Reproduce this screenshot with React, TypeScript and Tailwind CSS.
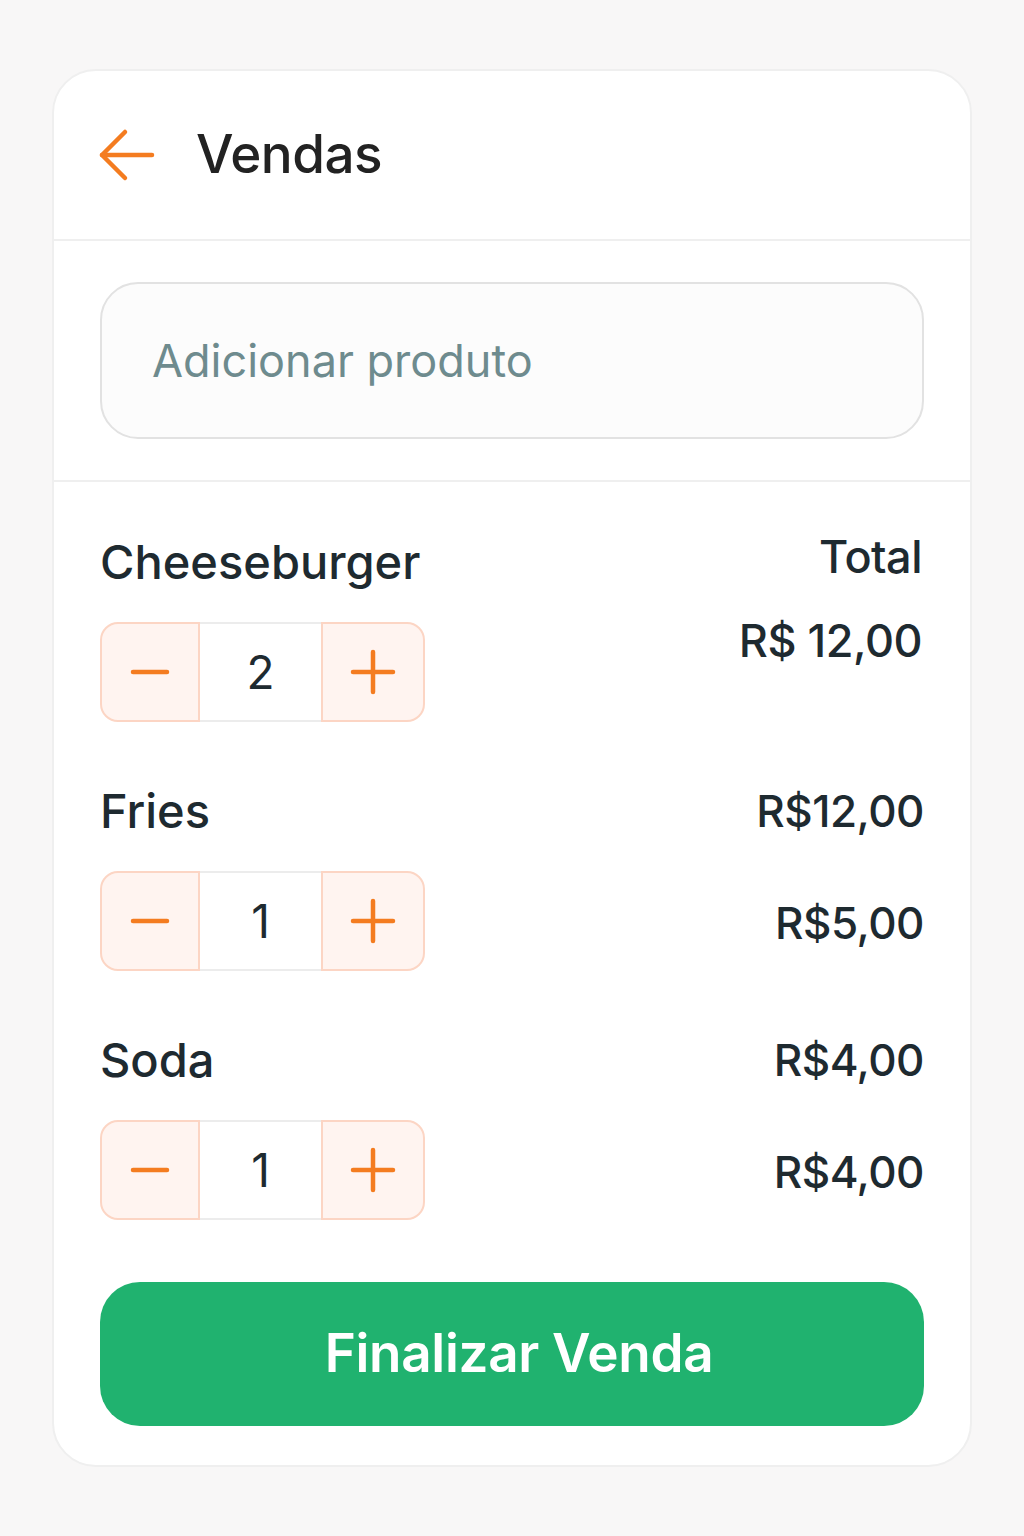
const items = [
  { name: 'Cheeseburger', qty: 2, top: 'Total', bottom: 'R$ 12,00', first: true },
  { name: 'Fries', qty: 1, top: 'R$12,00', bottom: 'R$5,00', first: false },
  { name: 'Soda', qty: 1, top: 'R$4,00', bottom: 'R$4,00', first: false },
];

function Stepper({ qty }: { qty: number }) {
  return (
    <div className="flex h-[100px] w-[325px]">
      <button className="flex w-[100px] items-center justify-center rounded-l-[18px] border-2 border-[#fcd5c4] bg-[#fff4f0]">
        <svg width="40" height="8" viewBox="0 0 40 8" fill="none" stroke="#f47c20" strokeWidth="4.5" strokeLinecap="round">
          <path d="M3 4H37" />
        </svg>
      </button>
      <div className="flex w-[121px] items-center justify-center border-y-2 border-[#ececec] bg-white text-[46px] text-[#1e2a30]">
        {qty}
      </div>
      <button className="flex w-[104px] items-center justify-center rounded-r-[18px] border-2 border-[#fcd5c4] bg-[#fff4f0]">
        <svg width="46" height="46" viewBox="0 0 46 46" fill="none" stroke="#f47c20" strokeWidth="4.5" strokeLinecap="round">
          <path d="M3 23H43" />
          <path d="M23 3V43" />
        </svg>
      </button>
    </div>
  );
}

export default function App() {
  return (
    <div className="min-h-[1536px] bg-[#f8f7f7] px-[52px] pt-[69px] font-['Inter',sans-serif]">
      <div className="w-[920px] overflow-hidden rounded-[44px] border-2 border-[#efefef] bg-white">
        <div className="flex h-[170px] items-center gap-[40px] border-b-2 border-[#efefef] px-[44px]">
          <svg width="58" height="54" viewBox="0 0 58 54" fill="none" stroke="#f47c20" strokeWidth="4.5" strokeLinecap="round" strokeLinejoin="round">
            <path d="M4 27H54" />
            <path d="M27 4L4 27L27 50" />
          </svg>
          <h1 className="text-[53px] font-medium tracking-[-0.5px] text-[#222]">Vendas</h1>
        </div>

        <div className="border-b-2 border-[#efefef] px-[46px] py-[41px]">
          <div className="flex h-[157px] items-center rounded-[38px] border-2 border-[#e2e2e2] bg-[#fcfcfc] px-[50px]">
            <span className="text-[45px] text-[#6e8b8e]">Adicionar produto</span>
          </div>
        </div>

        <div className="px-[46px] pt-[52px] pb-[39px]">
          <div className="flex flex-col gap-[61px]">
            {items.map((item) => (
              <div key={item.name} className="flex justify-between">
                <div className="flex flex-col gap-[32px]">
                  <div className="h-[56px] text-[47px] leading-[56px] font-medium text-[#1e2a30]">{item.name}</div>
                  <Stepper qty={item.qty} />
                </div>
                {item.first ? (
                  <div className="flex flex-col items-end pr-[2px] text-[45px] font-medium tracking-[-0.5px] text-[#1e2a30]">
                    <div className="h-[46px] leading-[46px]">{item.top}</div>
                    <div className="mt-[38px] leading-[46px]">{item.bottom}</div>
                  </div>
                ) : (
                  <div className="flex flex-col items-end text-[44px] font-medium tracking-[-0.5px] text-[#1e2a30]">
                    <div className="h-[56px] leading-[56px]">{item.top}</div>
                    <div className="mt-[56px] leading-[56px]">{item.bottom}</div>
                  </div>
                )}
              </div>
            ))}
          </div>

          <button className="mt-[62px] flex h-[144px] w-full items-center justify-center rounded-[40px] bg-[#20b26f] pl-[14px] text-[53px] font-semibold tracking-[-0.3px] text-white">
            Finalizar Venda
          </button>
        </div>
      </div>
    </div>
  );
}
